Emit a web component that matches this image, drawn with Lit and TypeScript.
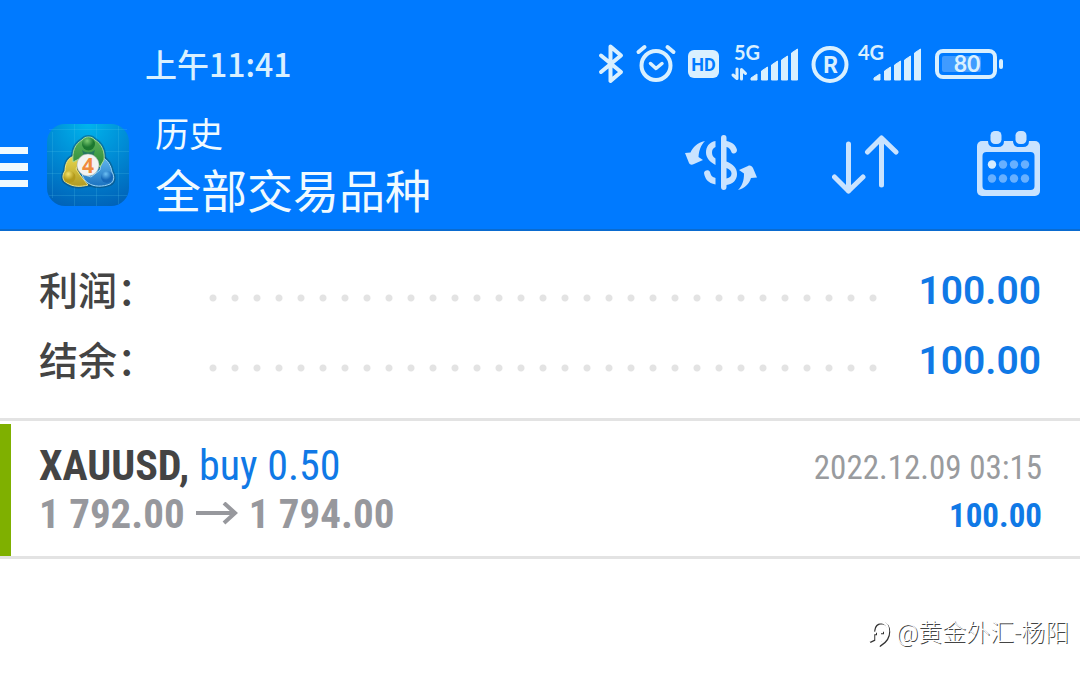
import { LitElement, html, svg, css } from "lit";
import { customElement, property } from "lit/decorators.js";

const signal = svg`
  <path d="M20 36v-2l6-4v6zM30.500 36V27l6-4v13zM40.500 36V21l6-4v19zM50.500 36V16l6-4v24zM60.500 36V9l6-4v31z" stroke="#d9f0ff" stroke-width="1" stroke-linejoin="round" />`;

@customElement("status-bar")
class StatusBar extends LitElement {
  static styles = css`
    :host {
      display: flex;
      align-items: center;
      justify-content: space-between;
      height: 40px;
      padding: 44px 77px 16px 145px;
      color: #d9f0ff;
      font-family: "Noto Sans CJK SC", sans-serif;
    }
    .time { font-size: 32px; line-height: 36px; font-weight: 500; padding-bottom: 2px; }
    .icons { display: flex; align-items: center; gap: 12px; }
    svg { display: block; fill: #d9f0ff; overflow: visible; }
    .net { font: 700 20px Lato, sans-serif; }
    .hd { font: 700 18px Roboto, sans-serif; fill: #007aff; }
    .reg { font: 700 23px Roboto, sans-serif; }
    .level { font: 700 23px Lato, sans-serif; }
    .line { fill: none; stroke: #d9f0ff; stroke-linecap: round; stroke-linejoin: round; }
  `;
  render() {
    return html`
      <span class="time">上午11:41</span>
      <div class="icons">
        <svg width="26" height="40" viewBox="0 0 26 40" aria-label="Bluetooth">
          <path class="line" stroke-width="4" d="M3 11.500 23 28 12.500 37V2.500L23 11.500 3 28" />
        </svg>
        <svg width="40" height="40" viewBox="0 0 40 40" aria-label="Alarm">
          <circle class="line" cx="20" cy="21.500" r="14.500" stroke-width="4" />
          <path class="line" stroke-width="3.500" d="m14.500 19.500 5.500 5 6-5" />
          <path class="line" stroke-width="4" d="m2.500 8 6-5M37.500 8l-6-5" />
        </svg>
        <svg width="31" height="40" viewBox="0 0 31 40" aria-label="HD">
          <rect x="0" y="6" width="31" height="28" rx="6" />
          <text class="hd" x="15.500" y="26.500" text-anchor="middle">HD</text>
        </svg>
        <svg width="68" height="48" viewBox="0 -4 68 48" aria-label="5G signal">
          <text class="net" x="3" y="16">5G</text>
          <path class="line" stroke-width="3" d="M6 25v9.500L2 31M10.500 35v-9.500l4 4" />
          ${signal}
        </svg>
        <svg width="38" height="40" viewBox="0 0 38 40" aria-label="Registered">
          <circle class="line" cx="19" cy="20.500" r="16.500" stroke-width="4" />
          <text class="reg" x="19.500" y="29" text-anchor="middle">R</text>
        </svg>
        <svg width="61" height="48" viewBox="7 -4 61 48" aria-label="4G signal">
          <text class="net" x="4" y="16">4G</text>
          ${signal}
        </svg>
        <svg width="69" height="40" viewBox="0 0 69 40" aria-label="Battery">
          <rect class="line" x="3" y="7" width="58" height="26" rx="6" stroke-width="4" />
          <rect x="8" y="12" width="39" height="16" rx="2" fill="#409bff" />
          <rect x="65" y="15" width="4" height="10" rx="2" />
          <text class="level" x="33" y="28" text-anchor="middle">80</text>
        </svg>
      </div>
    `;
  }
}

@customElement("app-bar")
class AppBar extends LitElement {
  static styles = css`
    :host {
      display: flex;
      align-items: center;
      height: 129px;
      padding-right: 38px;
      border-bottom: 2px solid #0a6bd0;
      font-family: "Noto Sans CJK SC", sans-serif;
      color: #f0faff;
    }
    button { border: 0; padding: 0; background: none; display: block; color: #c9e3ff; }
    svg { display: block; }
    .menu { margin-right: 19px; color: #f0faff; }
    .titles { flex: 1; margin-left: 26px; }
    h1, p { margin: 0; font-weight: 400; }
    p { font-size: 34px; line-height: 46px; }
    h1 { font-size: 46px; line-height: 64px; }
    .actions { display: flex; align-items: center; gap: 74px; padding-bottom: 4px; }
    .four { font: 700 21px "Open Sans", sans-serif; }
  `;
  render() {
    return html`
      <button class="menu" aria-label="Menu">
        <svg width="28" height="44" viewBox="0 0 28 44" fill="currentColor">
          <path d="M0 4h28v7H0zM0 20h28v8H0zM0 37h28v7H0z" />
        </svg>
      </button>
      <svg width="82" height="82" viewBox="0 0 82 82" aria-label="MetaTrader 4">
        <defs>
          <radialGradient id="bg" cx=".5" cy="0" r="1.050">
            <stop offset="0" stop-color="#00b4ec" /><stop offset=".5" stop-color="#008ad4" /><stop offset="1" stop-color="#0062b8" />
          </radialGradient>
          <linearGradient id="g" x2="0" y2="1"><stop stop-color="#5fb45c" /><stop offset="1" stop-color="#2b8a3a" /></linearGradient>
          <linearGradient id="y" x2="0" y2="1"><stop stop-color="#e8d84e" /><stop offset="1" stop-color="#b09a24" /></linearGradient>
          <linearGradient id="b" x2="0" y2="1"><stop stop-color="#64b8ee" /><stop offset="1" stop-color="#1a72c0" /></linearGradient>
          <radialGradient id="gb" cx=".4" cy=".25"><stop stop-color="#7ccb72" /><stop offset="1" stop-color="#1c7830" /></radialGradient>
          <radialGradient id="yb" cx=".4" cy=".25"><stop stop-color="#f3e46e" /><stop offset="1" stop-color="#b39a1c" /></radialGradient>
          <radialGradient id="bb" cx=".4" cy=".25"><stop stop-color="#6cc0f4" /><stop offset="1" stop-color="#1668b8" /></radialGradient>
        </defs>
        <rect width="82" height="82" rx="18" fill="url(#bg)" />
        <path d="M5.500 8v66M27.500 0v82M49.500 0v82M71.500 2v78M2 5.500h78M0 27.500h82M0 49.500h82M2 71.500h78" stroke="#5cd0f0" stroke-opacity=".18" fill="none" />
        <g stroke="#123c50" stroke-opacity=".4" stroke-width="4">
          <path d="M28 32c-7 1-10 8-10 15-3 4-3 10 2 12 6 4 14 4 21 2l-8-10z" fill="#b09a24" />
          <path d="M55 33c6 3 9 9 10 15 3 5 2 10-2 12-7 3-16 3-22-1l14-12z" fill="#1a72c0" />
          <path d="M26 38c-1-11 2-18 9-22 3-4 10-4 13 0 7 4 10 12 9 20l-4 8-20-6z" fill="#2b8a3a" />
        </g>
        <path d="M28 32c-7 1-10 8-10 15-3 4-3 10 2 12 6 4 14 4 21 2l-8-10-4-6 5-9z" fill="url(#y)" stroke="#efe68c" />
        <path d="M55 33c6 3 9 9 10 15 3 5 2 10-2 12-7 3-16 3-22-1-3-2-5-5-6-9l9 3 9-7z" fill="url(#b)" stroke="#9cd4f6" />
        <path d="M26 38c-1-11 2-18 9-22 3-4 10-4 13 0 7 4 10 12 9 20l-4 7-5-8c-4-5-10-5-14-1z" fill="url(#g)" stroke="#a9d998" />
        <path d="M35 26q6 5 13 0l-2 7h-9z" fill="#14606c" opacity=".6" />
        <circle cx="41.500" cy="20" r="6.500" fill="url(#gb)" />
        <circle cx="22.500" cy="53" r="6" fill="url(#yb)" />
        <circle cx="60" cy="53" r="6" fill="url(#bb)" />
        <circle cx="41" cy="41" r="11" fill="#f3f3f1" stroke="#9aa" stroke-width=".5" />
        <text class="four" x="41" y="48.500" text-anchor="middle" fill="#f08a3c">4</text>
      </svg>
      <div class="titles">
        <p>历史</p>
        <h1>全部交易品种</h1>
      </div>
      <div class="actions">
        <button aria-label="Currency">
          <svg width="73" height="68" viewBox="0 0 73 68" fill="currentColor">
            <path d="M20 12C12 14 8 18 5.500 23.500L0 24l4 10c1 2 3 2 5 1l9-4-4.500-3C14 21 16 16 20 12z" />
            <path d="M53 61c7-2 11-6 13-12l6-.5L68 39c-1-2-3-3-5-2l-9 4 5 3.500C59 52 57 57 53 61z" />
            <path d="M30.500 12C24 13 21 18 21 23.500S25 33 30.500 36v-6.500c-2.500-1.500-3.500-3.500-3.500-6s1-4.500 3.500-5.500z" />
            <path d="M30.500 55.500C23 54 20 50 19 44c0-3 5-4 6-1 1 4 2.500 5 5.500 6z" />
            <path fill-rule="evenodd" d="M36 9q0-3 2.800-3T41.500 9v3C47 13 51 16 52 21c0 4-5 5-6 1-1-2-2-3.500-4.500-4v14.500C48 35 52 39 52 45s-4 10-10.500 11v2q0 3-2.700 3T36 58zM41.500 39v10.500C45 49 46.500 47 46.500 44.500s-2-4.500-5-5.500z" />
          </svg>
        </button>
        <button aria-label="Sort">
          <svg width="70" height="68" viewBox="0 0 70 68" fill="none" stroke="currentColor" stroke-width="5" stroke-linecap="round" stroke-linejoin="round">
            <path d="M16.500 15v47M2.500 48l14 14L31 48M49.500 56V10M35.500 23 49.500 9 64 23" />
          </svg>
        </button>
        <button aria-label="Calendar">
          <svg width="66" height="68" viewBox="0 0 66 68">
            <rect x="1" y="12" width="63" height="55" rx="5" fill="currentColor" />
            <path d="M12 10h16v2q0 6-6 6h-4q-6 0-6-6zM37 10h16v2q0 6-6 6h-4q-6 0-6-6z" fill="#007aff" />
            <rect x="14.500" y="2" width="11" height="13" rx="4.500" fill="currentColor" />
            <rect x="39.500" y="2" width="11" height="13" rx="4.500" fill="currentColor" />
            <rect x="6.500" y="23" width="52" height="38" rx="4" fill="#007aff" />
            <g fill="#67b0ff">
              <circle cx="16" cy="35.500" r="4.200" fill="#d6ecff" /><circle cx="27" cy="35.500" r="4.200" /><circle cx="38" cy="35.500" r="4.200" /><circle cx="49" cy="35.500" r="4.200" />
              <circle cx="16" cy="49.500" r="4.200" /><circle cx="27" cy="49.500" r="4.200" /><circle cx="38" cy="49.500" r="4.200" /><circle cx="49" cy="49.500" r="4.200" />
            </g>
          </svg>
        </button>
      </div>
    `;
  }
}

@customElement("summary-row")
class SummaryRow extends LitElement {
  @property() label = "";
  @property() value = "";
  static styles = css`
    :host { display: flex; align-items: center; height: 70px; padding: 0 39px; }
    .label {
      width: 163px;
      padding-bottom: 4px;
      font: 500 39px/60px "Noto Sans CJK SC", sans-serif;
      color: #444;
    }
    .dots {
      flex: 1;
      height: 8px;
      margin: 16px 40px 0 0;
      background: radial-gradient(circle at 11px 4px, #e3e3e3 3px, transparent 4px) 0 0 / 22px 8px repeat-x;
    }
    .value { padding-top: 2px; font: 600 39px/60px Roboto, sans-serif; color: #1079e6; }
  `;
  render() {
    return html`
      <span class="label">${this.label}</span>
      <span class="dots"></span>
      <span class="value">${this.value}</span>
    `;
  }
}

@customElement("deal-row")
class DealRow extends LitElement {
  static styles = css`
    :host {
      display: block;
      padding-top: 3px;
      border: solid #e3e3e3;
      border-width: 3px 0;
      font-family: "Roboto Condensed", "Liberation Sans Narrow", sans-serif;
    }
    .deal {
      display: flex;
      justify-content: space-between;
      padding: 18px 38px 18px 28px;
      border-left: 11px solid #7fb000;
      line-height: 48px;
    }
    .left { font-size: 42px; }
    .right { padding-top: 2px; margin-bottom: -2px; font-size: 33px; text-align: right; }
    .symbol { font-weight: 700; color: #444; }
    .side { color: #1079e6; }
    .prices { display: flex; align-items: center; gap: 11px; font-size: 41px; font-weight: 700; color: #97989d; }
    .date { color: #999b9e; }
    .profit { font-weight: 700; color: #1079e6; }
  `;
  render() {
    return html`
      <div class="deal">
        <div class="left">
          <div><span class="symbol">XAUUSD,</span> <span class="side">buy 0.50</span></div>
          <div class="prices">
            <span>1 792.00</span>
            <svg width="42" height="24" viewBox="0 0 42 24" fill="none" stroke="currentColor" stroke-width="4">
              <path d="M0 11h39M28 1l11 10-11 10" />
            </svg>
            <span>1 794.00</span>
          </div>
        </div>
        <div class="right">
          <div class="date">2022.12.09 03:15</div>
          <div class="profit">100.00</div>
        </div>
      </div>
    `;
  }
}

@customElement("app-root")
class AppRoot extends LitElement {
  static styles = css`
    :host {
      display: flex;
      flex-direction: column;
      min-height: 100vh;
      background: #fff;
    }
    header { background: #007aff; }
    .summary { padding: 24px 0 23px; }
    footer {
      display: flex;
      align-items: center;
      justify-content: flex-end;
      gap: 6px;
      margin-top: auto;
      padding: 0 11px 24px 0;
      font: 300 24px/36px Roboto, "Noto Sans CJK SC", sans-serif;
      color: #fff;
      text-shadow: 1px 1px 0 #444;
    }
    .mark { filter: drop-shadow(1px 1px 0 #333); }
  `;
  render() {
    return html`
      <header>
        <status-bar></status-bar>
        <app-bar></app-bar>
      </header>
      <main>
        <div class="summary">
          <summary-row label="利润：" value="100.00"></summary-row>
          <summary-row label="结余：" value="100.00"></summary-row>
        </div>
        <deal-row></deal-row>
      </main>
      <footer>
        <svg class="mark" width="22" height="26" viewBox="0 0 22 26" fill="none" stroke="#fff" stroke-width="2.500">
          <path d="M1 21l4-2V10q1-8 8-8 7 1 7 9 0 8-8 13v-4M3 13h5M12 12h3" />
        </svg>
        <span>@黄金外汇-杨阳</span>
      </footer>
    `;
  }
}
